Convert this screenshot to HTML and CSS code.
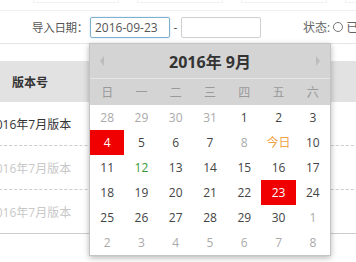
FILE: index.html
```html
<!DOCTYPE html>
<html lang="zh">
<head>
<meta charset="utf-8">
<title>导入日期</title>
<link rel="stylesheet" href="styles.css">
</head>
<body>
<div class="page">
  <div class="top-strip">
    <span class="ghost g1"></span>
    <span class="ghost g2"></span>
    <span class="ghost g3"></span>
    <span class="ghost g4"></span>
  </div>
  <div class="filter">
    <span class="label">导入日期：</span>
    <span class="input active">2016-09-23</span>
    <span class="dash">-</span>
    <span class="input"></span>
    <span class="status">状态: <span class="radio"></span> 已</span>
  </div>
  <div class="table">
    <div class="row head">
      <div class="c1">版本号</div>
      <div class="cmid"></div>
      <div class="clast"></div>
    </div>
    <div class="row r1">
      <div class="c1">2016年7月版本</div>
      <div class="cmid"></div>
      <div class="clast"><span class="badge red"></span></div>
    </div>
    <div class="row r2 dim">
      <div class="c1">2016年7月版本</div>
      <div class="cmid"></div>
      <div class="clast"><span class="badge yellow"></span></div>
    </div>
    <div class="row r3 dim last">
      <div class="c1">2016年7月版本</div>
      <div class="cmid"></div>
      <div class="clast"><span class="badge yellow"></span></div>
    </div>
  </div>

  <div class="picker">
    <div class="p-head">
      <span class="arrow left"></span>
      <span class="title">2016年 9月</span>
      <span class="arrow right"></span>
    </div>
    <div class="p-week">
      <span>日</span><span>一</span><span>二</span><span>三</span><span>四</span><span>五</span><span>六</span>
    </div>
    <div class="p-days">
      <span class="o">28</span><span class="o">29</span><span class="o">30</span><span class="o">31</span><span>1</span><span>2</span><span>3</span>
      <span class="sel">4</span><span>5</span><span>6</span><span>7</span><span class="o">8</span><span class="today">今日</span><span>10</span>
      <span>11</span><span class="green">12</span><span>13</span><span>14</span><span>15</span><span>16</span><span>17</span>
      <span>18</span><span>19</span><span>20</span><span>21</span><span>22</span><span class="sel">23</span><span>24</span>
      <span>25</span><span>26</span><span>27</span><span>28</span><span>29</span><span>30</span><span class="o">1</span>
      <span class="o">2</span><span class="o">3</span><span class="o">4</span><span class="o">5</span><span class="o">6</span><span class="o">7</span><span class="o">8</span>
    </div>
  </div>
</div>
</body>
</html>
```

FILE: styles.css
```css
html, body {
  margin: 0;
  padding: 0;
  background: #fff;
  overflow: hidden;
}
body {
  width: 356px;
  height: 262px;
  font-family: "Open Sans", "Noto Sans CJK SC", sans-serif;
  font-size: 12px;
  color: #333;
}
.page {
  position: relative;
  width: 356px;
  height: 262px;
  overflow: hidden;
}

/* faint remnants of the row above */
.top-strip {
  height: 11px;
  box-sizing: border-box;
  border-bottom: 1px solid #f0f0f0;
  display: flex;
  align-items: flex-start;
  padding-left: 33px;
  gap: 18px;
}
.ghost {
  display: block;
  height: 2px;
  border: 1px solid #f2f2f2;
  border-top: none;
  flex-shrink: 0;
}
.g1 { width: 84px; }
.g2 { width: 84px; }
.g3 { width: 84px; }
.g4 { width: 40px; }

.filter {
  height: 33px;
  box-sizing: border-box;
  border-bottom: 1px solid #e6e6e6;
  display: flex;
  align-items: center;
  padding-left: 32px;
  color: #555;
  white-space: nowrap;
}
.filter > * { flex-shrink: 0; }
.label {
  width: 58px;
  font-size: 11.5px;
  letter-spacing: -0.3px;
}
.input {
  display: block;
  width: 80px;
  height: 21px;
  box-sizing: border-box;
  border: 1px solid #cfcfcf;
  border-radius: 2px;
  line-height: 19px;
  padding-left: 4px;
  color: #555;
  font-size: 12px;
}
.input.active {
  border-color: #7fb0cf;
  box-shadow: 0 0 2px rgba(102, 175, 233, 0.4);
}
.dash {
  width: 11px;
  text-align: center;
}
.status {
  margin-left: 42px;
  color: #666;
  display: flex;
  align-items: center;
  gap: 3px;
}
.radio {
  display: inline-block;
  width: 8px;
  height: 8px;
  border: 1px solid #777;
  border-radius: 50%;
}

/* table */
.table {
  margin-top: 17px;
  margin-left: -16px;
  width: 420px;
}
.row {
  display: flex;
  align-items: center;
  height: 43px;
  border-bottom: 1px dashed #cccccc;
}
.row.head {
  height: 41px;
  background: #e2e2e2;
  border-bottom: none;
  font-weight: bold;
  color: #333;
}
.row.last { border-bottom: 1px solid #cccccc; }
.c1 {
  width: 92px;
  text-align: center;
  white-space: nowrap;
}
.dim .c1 { color: #c8c8c8; }
.cmid { flex: 1; }
.clast {
  width: 48px;
  display: flex;
  justify-content: flex-start;
}
.badge {
  display: block;
  width: 40px;
  border-radius: 4px;
}
.badge.red {
  height: 15px;
  background: #d9141e;
}
.badge.yellow {
  height: 11px;
  background: #fcf1cf;
}

/* date picker */
.picker {
  position: absolute;
  left: 89px;
  top: 43px;
  width: 242px;
  box-sizing: border-box;
  border: 1px solid #c4c4c4;
  background: #fff;
  box-shadow: 0 2px 6px rgba(0, 0, 0, 0.28);
}
.p-head {
  height: 34px;
  background: #d4d4d4;
  border-bottom: 1px solid #e6e6e6;
  display: flex;
  align-items: center;
  justify-content: space-between;
  padding: 0 10px;
}
.title {
  font-size: 16px;
  font-weight: bold;
  color: #333;
}
.arrow {
  width: 0;
  height: 0;
  border-top: 5px solid transparent;
  border-bottom: 5px solid transparent;
}
.arrow.left { border-right: 4px solid #bcbcbc; }
.arrow.right { border-left: 4px solid #bcbcbc; }
.p-week {
  height: 26px;
  background: #d4d4d4;
  display: grid;
  grid-template-columns: repeat(7, 1fr);
  align-items: center;
  text-align: center;
  color: #9a9a9a;
}
.p-days {
  display: grid;
  grid-template-columns: repeat(7, 1fr);
  grid-auto-rows: 25px;
  text-align: center;
  line-height: 25px;
  color: #444;
}
.p-days .o { color: #aaaaaa; }
.p-days .sel {
  background: #f00000;
  color: #fff;
}
.p-days .today { color: #f0a445; }
.p-days .green { color: #3a9a3a; }
```
